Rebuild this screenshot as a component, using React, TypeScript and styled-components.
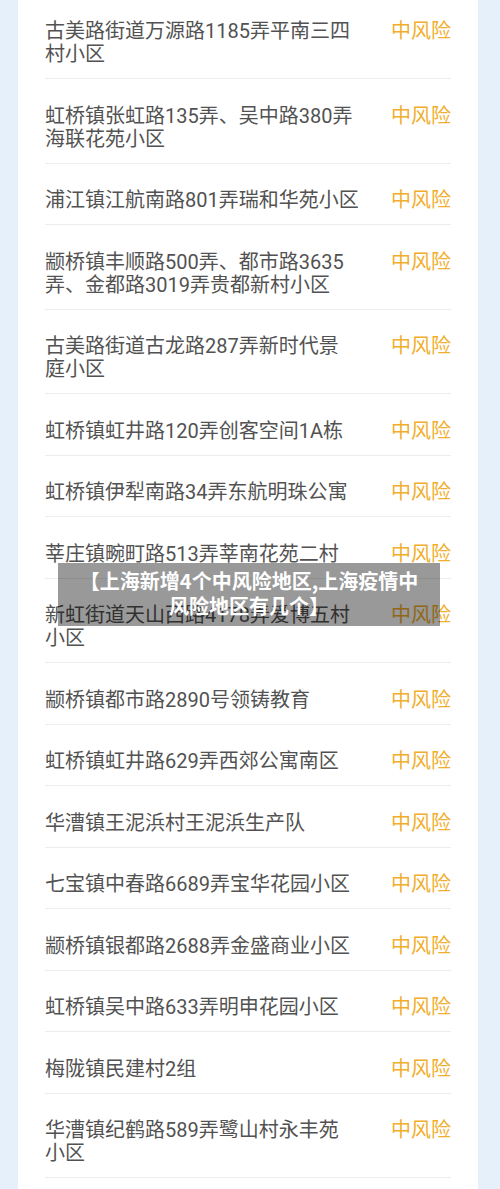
import styled, { createGlobalStyle } from "styled-components";

/*
    Shanghai medium-risk area list, scrolled view with a caption overlay
*/

const GlobalStyle = createGlobalStyle`
    html, body {
        margin: 0;
        padding: 0;
        overflow: hidden;
        background-color: #e6f0fa;
        font-family: Roboto, "Noto Sans CJK SC", sans-serif;
    }
`

const Page = styled.div`
    position: relative;
    padding: 0 22px 0 18px;
    height: 1189px;
    overflow: hidden;
`

const Card = styled.div`
    background-color: #ffffff;
    margin-top: -5.5px;
    padding: 0 27px 20px;
`

const Row = styled.div`
    display: flex;
    justify-content: space-between;
    align-items: flex-start;
    padding: 25.5px 0 12px;
    border-bottom: 1px solid #ededed;
`

const Name = styled.div`
    font-size: 20px;
    line-height: 23px;
    color: #525252;
`

const Line = styled.div`
    white-space: nowrap;
`

const Level = styled.div<{$color: string}>`
    font-size: 20px;
    line-height: 23px;
    color: ${props => props.$color};
    white-space: nowrap;
`

const Caption = styled.div`
    position: absolute;
    top: 563px;
    left: 58px;
    width: 382px;
    height: 63px;
    box-sizing: border-box;
    padding: 5px 0 0;
    background-color: rgba(0, 0, 0, 0.4);
    color: #ffffff;
    font-family: "Noto Sans CJK SC", sans-serif;
    font-size: 20px;
    font-weight: 700;
    line-height: 25px;
    text-align: center;
`

// ~~~~~~~~~~~~~~~~~~~~~~~~~~~~~~~~~~~~~~~~~~~~~~~~~~~~~~~~~~~~~~

// each area as the lines it wraps into
const areas: string[][] = [
    ["古美路街道万源路1185弄平南三四", "村小区"],
    ["虹桥镇张虹路135弄、吴中路380弄", "海联花苑小区"],
    ["浦江镇江航南路801弄瑞和华苑小区"],
    ["颛桥镇丰顺路500弄、都市路3635", "弄、金都路3019弄贵都新村小区"],
    ["古美路街道古龙路287弄新时代景", "庭小区"],
    ["虹桥镇虹井路120弄创客空间1A栋"],
    ["虹桥镇伊犁南路34弄东航明珠公寓"],
    ["莘庄镇畹町路513弄莘南花苑二村"],
    ["新虹街道天山西路4178弄爱博五村", "小区"],
    ["颛桥镇都市路2890号领铸教育"],
    ["虹桥镇虹井路629弄西郊公寓南区"],
    ["华漕镇王泥浜村王泥浜生产队"],
    ["七宝镇中春路6689弄宝华花园小区"],
    ["颛桥镇银都路2688弄金盛商业小区"],
    ["虹桥镇吴中路633弄明申花园小区"],
    ["梅陇镇民建村2组"],
    ["华漕镇纪鹤路589弄鹭山村永丰苑", "小区"],
]

export default function App() {
    return (
        <>
        <GlobalStyle />
        <Page>
            <Card>
                {areas.map((lines, index) => (
                    <Row key={index}>
                        <Name>
                            {lines.map((line, i) => <Line key={i}>{line}</Line>)}
                        </Name>
                        <Level $color="#f1ae2c">中风险</Level>
                    </Row>
                ))}
            </Card>
            <Caption>
                <Line>【上海新增4个中风险地区,上海疫情中</Line>
                <Line>风险地区有几个】</Line>
            </Caption>
        </Page>
        </>
    )
}
